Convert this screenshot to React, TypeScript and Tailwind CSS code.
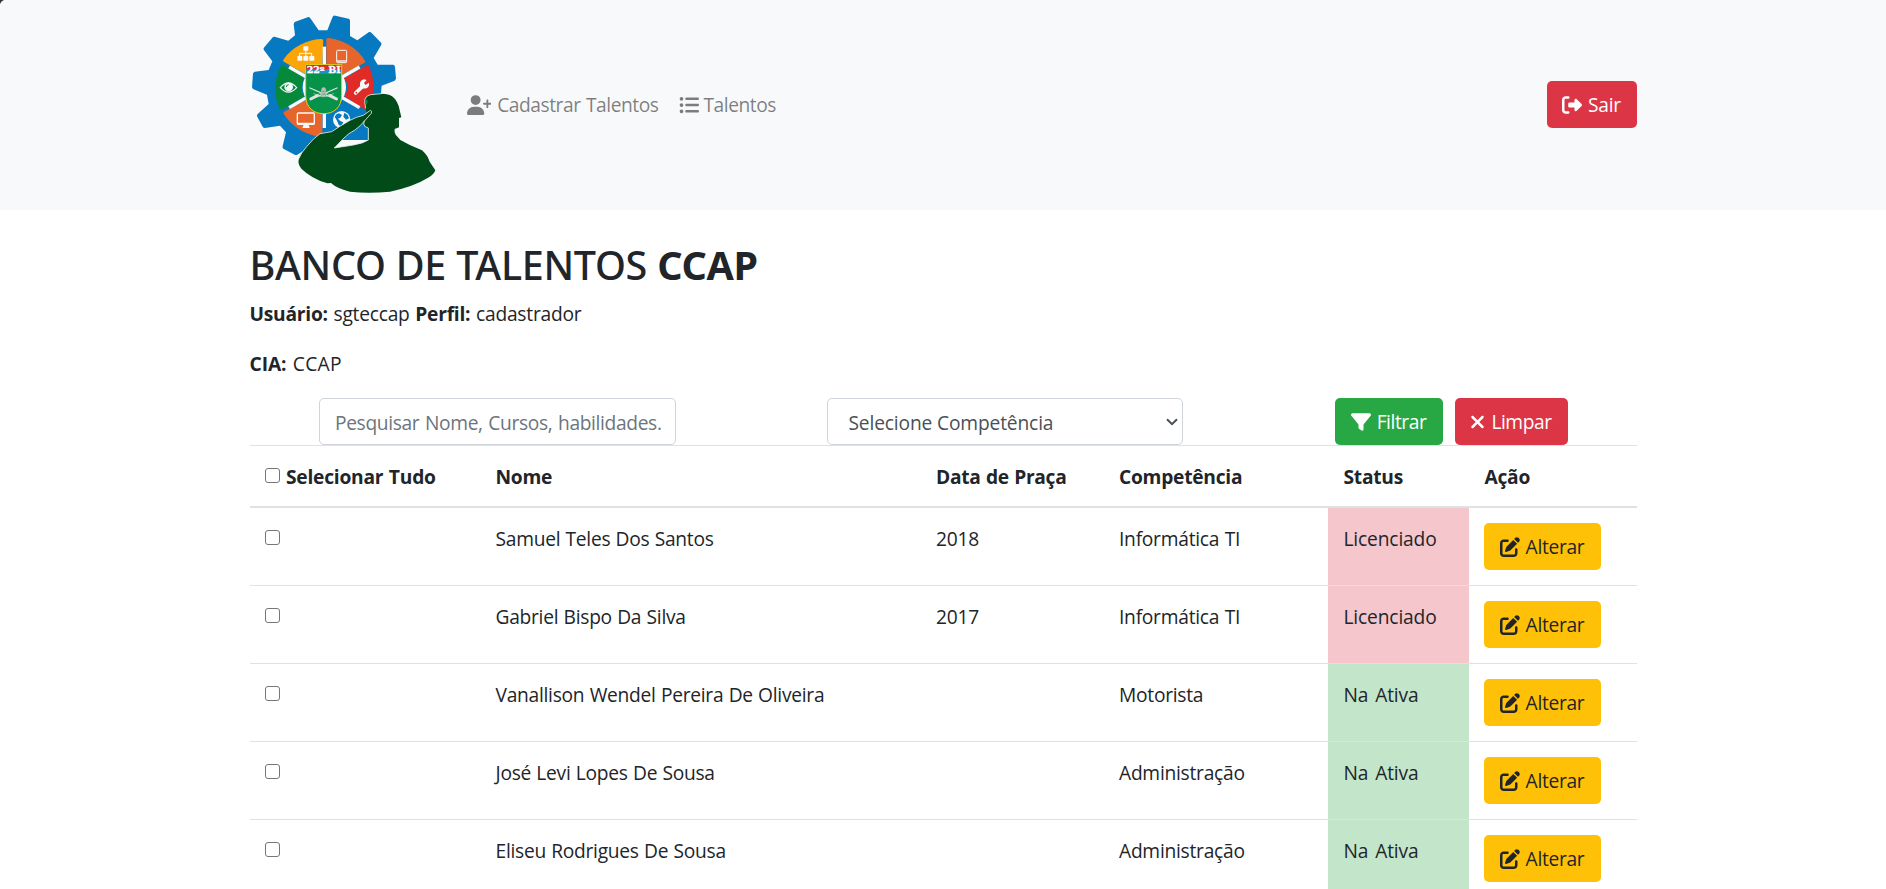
import {
  FaUserPlus,
  FaListUl,
  FaRightFromBracket,
  FaFilter,
  FaXmark,
  FaPenToSquare,
} from "react-icons/fa6";

type Person = {
  nome: string;
  praca: string;
  competencia: string;
  status: "Licenciado" | "Na Ativa";
};

const people: Person[] = [
  { nome: "Samuel Teles Dos Santos", praca: "2018", competencia: "Informática TI", status: "Licenciado" },
  { nome: "Gabriel Bispo Da Silva", praca: "2017", competencia: "Informática TI", status: "Licenciado" },
  { nome: "Vanallison Wendel Pereira De Oliveira", praca: "", competencia: "Motorista", status: "Na Ativa" },
  { nome: "José Levi Lopes De Sousa", praca: "", competencia: "Administração", status: "Na Ativa" },
  { nome: "Eliseu Rodrigues De Sousa", praca: "", competencia: "Administração", status: "Na Ativa" },
];

const columns = "grid grid-cols-[230px_441px_183px_224px_141px_168px]";
const checkbox =
  "block size-[15px] shrink-0 appearance-none rounded-[3px] border-[1.5px] border-[#767676] bg-white checked:bg-[#0075ff]";

const segment =
  "M259 198V120Q259 113 266 114A148 148 0 0 1 374 181Q378 187 371 190L307 224Q295 203 275 196Z";

function Logo() {
  return (
    <svg viewBox="30 0 558 630" className="h-[210px] w-[186px] shrink-0" aria-label="22º BI">
      <path
        fill="#0779c1"
        d="M164 66L205 51Q209 51 211 55L236 91H262L278 50Q281 46 286 47L326 56Q330 57 330 62V108L352 121L387 96Q392 95 395 99L424 129V134L401 174L413 194H460Q464 196 465 200L468 236L464 242L425 257L422 290L385 345V420L240 420L172 464Q166 467 160 462L130 446Q127 444 128 438L138 397L120 377L75 384Q70 384 68 380L51 349Q50 345 53 342L86 312L81 284L39 267L36 262L39 220L44 215L86 210L97 184L71 149V144L99 111L104 110L145 122L165 106L161 72Z"
      />
      <g>
        <path d={segment} fill="#e7652b" />
        <path d={segment} fill="#e02b26" transform="rotate(60 253 262)" />
        <path d={segment} fill="#e7652b" transform="rotate(180 253 262)" />
        <path d={segment} fill="#07893c" transform="rotate(240 253 262)" />
        <path d={segment} fill="#fca509" transform="rotate(300 253 262)" />
      </g>
      <g stroke="#f8f9fa" strokeWidth="10">
        <path d="M253 140V384" />
        <path d="M253 140V384" transform="rotate(60 253 262)" />
        <path d="M253 140V384" transform="rotate(120 253 262)" />
      </g>
      <circle cx="253" cy="262" r="65" fill="#f8f9fa" />
      <path d="M266 336L306 310L316 322L262 352Z" fill="#0779c1" />
      <path d="M236 338L199 314L192 324L240 352Z" fill="#e7652b" />
      {/* organisation chart */}
      <g fill="#f8f9fa">
        <rect x="190" y="139" width="15" height="13" rx="2" />
        <rect x="172" y="168" width="15" height="14" rx="2" />
        <rect x="190" y="168" width="15" height="14" rx="2" />
        <rect x="208" y="168" width="15" height="14" rx="2" />
        <path d="M179 169V160H215V169M197.500 150V169" fill="none" stroke="#f8f9fa" strokeWidth="3" />
      </g>
      {/* tablet */}
      <rect x="290" y="151" width="30" height="37" rx="3" fill="none" stroke="#f8f9fa" strokeWidth="3" />
      <path d="M290 183H320" stroke="#f8f9fa" strokeWidth="4" />
      {/* eye */}
      <path d="M121 263Q145 234 170 263Q145 290 121 263Z" fill="none" stroke="#f8f9fa" strokeWidth="3.500" />
      <circle cx="146" cy="261" r="13" fill="#f8f9fa" />
      <path d="M139 261A7 7 0 0 1 146 254" fill="none" stroke="#07893c" strokeWidth="3" />
      {/* wrench */}
      <path d="M347 279L370 257" stroke="#f8f9fa" strokeWidth="11" strokeLinecap="round" />
      <path d="M380 240L372 249L376 255L387 248Q389 261 379 265Q364 268 360 257Q358 240 372 238Z" fill="#f8f9fa" />
      <circle cx="349" cy="278" r="2.500" fill="#e02b26" />
      {/* monitor */}
      <rect x="172" y="339" width="51" height="34" rx="3" fill="none" stroke="#f8f9fa" strokeWidth="4" />
      <path d="M171 368H224V373H171ZM191 374H206L209 384H187Z" fill="#f8f9fa" />
      {/* globe */}
      <circle cx="305" cy="359" r="26" fill="#f8f9fa" />
      <path
        d="M284 350Q288 341 297 340L306 345L301 353L294 356L301 363L310 367L303 379L296 374L291 362ZM313 338L323 345L327 355L318 359L310 350Z"
        fill="#0779c1"
      />
      <path d="M296 441Q304 426 320 424Q334 424 338 433Z" fill="#f8f9fa" />
      {/* shield */}
      <path d="M197 194H305V285C305 323 281 341 251 341S197 323 197 285Z" fill="#07924a" stroke="#e3cf1d" strokeWidth="3" />
      <path d="M199 195H303V208H199Z" fill="#e4232c" />
      <path d="M199 208H303V221H199Z" fill="#238fc7" />
      <text
        x="251"
        y="220"
        textAnchor="middle"
        textLength="102"
        lengthAdjust="spacingAndGlyphs"
        className="[font-family:'DejaVu_Serif',serif] text-[25px] font-bold tracking-normal"
        fill="#fff"
        stroke="#fff"
        strokeWidth="0.8"
      >
        22º BI
      </text>
      <g fill="none" stroke="#dfe4e1" strokeLinecap="round">
        <path d="M210 264L288 298M291 264L213 298" strokeWidth="4" />
        <path d="M212 297L232 286M290 297L270 286" strokeWidth="8" />
        <path d="M222 281Q250 300 280 281M228 289Q250 266 274 289" strokeWidth="2" />
      </g>
      <ellipse cx="251" cy="276" rx="8" ry="14" fill="#b5beb8" />
      <path d="M245 274H257M246 282H256" stroke="#6f8f7c" strokeWidth="2" />
      {/* saluting soldier */}
      <path
        fill="#014b19"
        d="M374 305Q374 288 392 284Q425 278 447 284Q467 291 476 318L484 352L477 354V382L464 387Q462 398 467 404L481 420Q510 437 546 451Q563 466 569 485L586 511Q583 522 567 532Q520 561 450 575Q385 581 330 575Q290 565 273 549L262 550Q215 536 184 506Q173 492 176 480Q179 462 199 440Q220 415 240 401L275 395Q300 378 328 362Q350 350 370 346L391 331Q397 332 394 340L376 360Q362 378 345 390Q325 400 312 414L283 444L340 435Q370 430 385 420V384L374 379Q369 372 373 362L381 345L377 325Z"
      />
      <path
        fill="none"
        stroke="#e4eee9"
        strokeWidth="2.500"
        strokeLinejoin="round"
        d="M177 475Q182 460 200 440Q220 415 240 401L275 395Q300 378 328 362Q350 350 370 346L391 331Q397 332 394 340L376 360Q362 378 345 390Q325 400 312 414L283 444L340 435Q370 430 385 420V384L374 379Q369 372 373 362M377 325L374 305Q374 288 392 284L425 281"
      />
      <path d="M377 297L383 303L380 314L375 309Z" fill="#0b9550" />
    </svg>
  );
}

function App() {
  return (
    <div className="relative h-[889px] overflow-hidden bg-white [font-family:'Open_Sans','Noto_Sans',sans-serif] text-[19.2px] leading-[30px] tracking-[-0.25px] text-[#212529] [word-spacing:0.8px]">
      <svg viewBox="0 0 4 4" className="absolute top-0 left-0 size-1" aria-hidden="true">
        <path d="M0 0H4Q1 1 0 4Z" fill="#333" />
      </svg>

      <nav className="h-[210px] bg-[#f8f9fa]">
        <div className="mx-auto flex h-full w-[1387px] items-center">
          <Logo />
          <div className="ml-[31px] flex items-center gap-5 tracking-[-0.45px] whitespace-nowrap text-black/50">
            <a href="#cadastrar" className="flex w-[192px] items-center gap-[6px]">
              <FaUserPlus className="h-5 w-[25px]" />
              Cadastrar Talentos
            </a>
            <a href="#talentos" className="flex items-center gap-[5px]">
              <FaListUl className="size-5" />
              Talentos
            </a>
          </div>
          <button className="mb-px ml-auto flex h-[47px] w-[90px] items-center justify-center gap-[6px] rounded-[5px] bg-[#dc3545] text-white">
            <FaRightFromBracket className="size-5" />
            Sair
          </button>
        </div>
      </nav>

      <main className="mx-auto w-[1387px] pt-8">
        <h1 className="-mt-px [font-family:'Noto_Sans','Open_Sans',sans-serif] text-[39.5px] leading-[48px] font-medium tracking-[-0.3px] whitespace-nowrap [word-spacing:0.2px]">
          BANCO DE TALENTOS <strong className="font-bold">CCAP</strong>
        </h1>
        <p className="mt-[10px] tracking-[-0.23px] [word-spacing:0.9px]">
          <strong>Usuário:</strong> sgteccap <strong>Perfil:</strong> cadastrador
        </p>
        <p className="mt-5 tracking-[-0.1px] [word-spacing:1.5px]">
          <strong>CIA:</strong> <span className="tracking-[0.3px]">CCAP</span>
        </p>

        <form className="mt-[19px] flex pl-[69px]" onSubmit={(e) => e.preventDefault()}>
          <input
            className="h-[47px] w-[357px] rounded-[5px] border border-[#ced4da] pr-[14px] pl-[15.5px] pt-0.5 tracking-[-0.35px] [word-spacing:1px] placeholder:text-[#6c757d]"
            placeholder="Pesquisar Nome, Cursos, habilidades."
          />
          <div className="relative ml-[151px] flex h-[47px] w-[356px] items-center rounded-[5px] border border-[#ced4da]">
            <select className="h-full w-full appearance-none bg-transparent pt-0.5 pl-[21px] tracking-[-0.15px] text-[#495057]">
              <option>Selecione Competência</option>
            </select>
            <svg viewBox="0 0 12 8" className="pointer-events-none absolute top-[19px] right-1 h-2 w-3" aria-hidden="true">
              <path d="M1 1.200L6 6.200L11 1.200" fill="none" stroke="#495057" strokeWidth="2" />
            </svg>
          </div>
          <button className="ml-[152px] flex h-[47px] w-[108px] items-center justify-center gap-[6px] rounded-[5px] bg-[#28a745] tracking-[-0.45px] text-white">
            <FaFilter className="size-5" />
            Filtrar
          </button>
          <button className="ml-3 flex h-[47px] w-[113px] items-center justify-center gap-[6px] rounded-[5px] bg-[#dc3545] tracking-[-0.45px] text-white">
            <FaXmark className="h-5 w-[15px]" />
            Limpar
          </button>
        </form>

        <section className="text-left">
          <div className={`${columns} h-[63px] border-t border-b-2 border-[#dee2e6] pt-4 font-bold`}>
            <div className="flex gap-[6.5px] pl-[15px] tracking-[-0.23px]">
              <input type="checkbox" className={`${checkbox} mt-[6px]`} />
              Selecionar Tudo
            </div>
            <div className="pl-4">Nome</div>
            <div className="pl-[15.5px] tracking-[-0.32px]">Data de Praça</div>
            <div className="pl-[15.5px]">Competência</div>
            <div className="pl-4">Status</div>
            <div className="pl-4">Ação</div>
          </div>
          {people.map((p) => (
            <div key={p.nome} className={`${columns} h-[78px] border-b border-[#dee2e6]`}>
              <div className="pt-[22px] pl-[15px]">
                <input type="checkbox" className={checkbox} />
              </div>
              <div className="pt-4 pl-4 tracking-[-0.27px] whitespace-nowrap [word-spacing:0.6px]">{p.nome}</div>
              <div className="pt-4 pl-[15.5px]">{p.praca}</div>
              <div className="pt-4 pl-[15.5px]">{p.competencia}</div>
              <div
                className={`pt-4 pl-4 tracking-[-0.15px] [word-spacing:2px] ${p.status === "Licenciado" ? "bg-[#f5c6cb]" : "bg-[#c3e6cb]"}`}
              >
                {p.status}
              </div>
              <div className="pt-[15px] pl-[15px]">
                <button className="flex h-[47px] w-[117px] items-center justify-center gap-[6px] rounded-[5px] bg-[#ffc107] tracking-[-0.3px]">
                  <FaPenToSquare className="size-5" />
                  Alterar
                </button>
              </div>
            </div>
          ))}
        </section>
      </main>
    </div>
  );
}

export default App;
